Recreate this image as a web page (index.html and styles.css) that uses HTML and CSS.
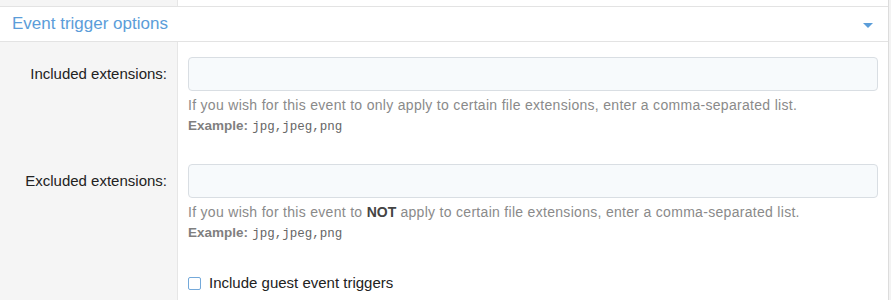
FILE: index.html
```html
<!DOCTYPE html>
<html lang="en">
<head>
  <meta charset="UTF-8" />
  <title>Event trigger options</title>
  <link rel="stylesheet" href="styles.css">
</head>
<body>
  <div class="panel">
    <div class="top-strip">
      <div class="top-strip-left"></div>
      <div class="top-strip-right"></div>
    </div>

    <div class="block-header">
      <span class="block-title">Event trigger options</span>
      <span class="caret"></span>
    </div>

    <div class="form-row">
      <label class="row-label" for="included">Included extensions:</label>
      <div class="row-input">
        <input type="text" id="included" class="text-input" />
        <div class="hint">If you wish for this event to only apply to certain file extensions, enter a comma-separated list.</div>
        <div class="hint"><b>Example:</b> <code>jpg,jpeg,png</code></div>
      </div>
    </div>

    <div class="form-row">
      <label class="row-label" for="excluded">Excluded extensions:</label>
      <div class="row-input">
        <input type="text" id="excluded" class="text-input" />
        <div class="hint">If you wish for this event to <b class="strong">NOT</b> apply to certain file extensions, enter a comma-separated list.</div>
        <div class="hint"><b>Example:</b> <code>jpg,jpeg,png</code></div>
      </div>
    </div>

    <div class="form-row check-row">
      <div class="row-label"></div>
      <div class="row-input">
        <label class="check">
          <span class="check-box"></span>
          Include guest event triggers
        </label>
      </div>
    </div>
  </div>
</body>
</html>
```

FILE: styles.css
```css
* {
  box-sizing: border-box;
  padding: 0;
  margin: 0;
}

body {
  font-family: "Liberation Sans", Arial, sans-serif;
  background-color: #f3f3f3;
  color: #333;
}

.panel {
  width: 889px;
  height: 300px;
  background-color: #fff;
  border-right: 1px solid #dcdcdc;
  overflow: hidden;
}

.top-strip {
  display: grid;
  grid-template-columns: 178px 1fr;
  height: 7px;
  border-bottom: 1px solid #e3e3e3;
}

.top-strip-left {
  background-color: #f5f5f5;
  border-right: 1px solid #e6e6e6;
}

.block-header {
  display: flex;
  justify-content: space-between;
  align-items: center;
  height: 35px;
  padding: 0 15px 0 12px;
  border-bottom: 1px solid #e3e3e3;
}

.block-title {
  font-size: 17px;
  color: #5b9dd9;
}

.caret {
  width: 0;
  height: 0;
  border-left: 5px solid transparent;
  border-right: 5px solid transparent;
  border-top: 5px solid #5b9dd9;
  margin-top: 2px;
}

.form-row {
  display: grid;
  grid-template-columns: 178px 1fr;
}

.row-label {
  background-color: #f5f5f5;
  border-right: 1px solid #e6e6e6;
  text-align: right;
  padding: 15px 10px 0 0;
  font-size: 15px;
  line-height: 34px;
  color: #222;
}

.row-input {
  padding: 15px 10px 12px 10px;
}

.text-input {
  display: block;
  width: 100%;
  height: 34px;
  border: 1px solid #d9dee3;
  border-radius: 4px;
  background-color: #f7fafc;
}

.hint {
  font-size: 14px;
  line-height: 20px;
  letter-spacing: 0.3px;
  color: #8a8a8a;
}

.text-input + .hint {
  margin-top: 4px;
}

.hint b {
  font-size: 13.5px;
  letter-spacing: 0;
  color: #7f7f7f;
}

.hint .strong {
  font-size: 14px;
  color: #444;
}

.hint code {
  font-family: "Liberation Mono", "Courier New", monospace;
  font-size: 12.5px;
  letter-spacing: 0;
  color: #666;
}

.check-row .row-input {
  padding-top: 17px;
}

.check {
  display: flex;
  align-items: center;
  gap: 8px;
  font-size: 15px;
  line-height: 20px;
  color: #222;
}

.check-box {
  width: 13px;
  height: 13px;
  border: 1.5px solid #74a9da;
  border-radius: 2px;
  background-color: #fff;
}
```
